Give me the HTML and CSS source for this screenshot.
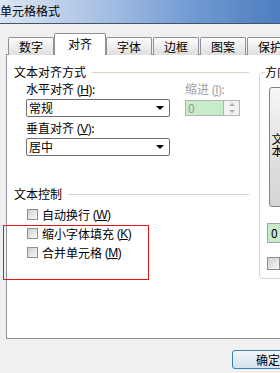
FILE: index.html
```html
<!DOCTYPE html>
<html lang="zh-CN">
    <head>
        <meta charset="UTF-8">
        <meta name="viewport" content="width=device-width, initial-scale=1.0">
        <title>单元格格式</title>
        <link rel="stylesheet" href="styles.css">
    </head>
    <body>
        <div class="titlebar">单元格格式</div>

        <div class="tabs">
            <div class="tab">数字</div>
            <div class="tab active">对齐</div>
            <div class="tab">字体</div>
            <div class="tab">边框</div>
            <div class="tab">图案</div>
            <div class="tab">保护</div>
        </div>

        <div class="panel">
            <div class="left">
                <div class="legend">文本对齐方式<span class="rule"></span></div>
                <div class="fields">
                    <div class="col">
                        <div class="label">水平对齐 <span class="key">(<u>H</u>)</span>:</div>
                        <div class="select"><span>常规</span><span class="arrow"></span></div>
                        <div class="label second">垂直对齐 <span class="key">(<u>V</u>)</span>:</div>
                        <div class="select"><span>居中</span><span class="arrow"></span></div>
                    </div>
                    <div class="indent">
                        <div class="label grey">缩进 <span class="key">(<u>I</u>)</span>:</div>
                        <div class="spin">
                            <div class="num">0</div>
                            <div class="spin-btns">
                                <span class="up"></span>
                                <span class="down"></span>
                            </div>
                        </div>
                    </div>
                </div>

                <div class="legend control">文本控制<span class="rule"></span></div>
                <div class="checks">
                    <div class="check"><span class="box"></span>自动换行 <span class="key">(<u>W</u>)</span></div>
                    <div class="check"><span class="box"></span>缩小字体填充 <span class="key">(<u>K</u>)</span></div>
                    <div class="check"><span class="box"></span>合并单元格 <span class="key">(<u>M</u>)</span></div>
                </div>
            </div>

            <fieldset class="orient">
                <legend>方向</legend>
                <div class="dial">
                    <span class="vtext">文本</span>
                </div>
                <div class="degrees">0</div>
                <span class="box small"></span>
            </fieldset>
        </div>

        <div class="footer">
            <button class="ok">确定</button>
        </div>

        <div class="mark"></div>
    </body>
</html>
```

FILE: styles.css
```css
body {
    margin: 0;
    width: 280px;
    height: 373px;
    overflow: hidden;
    position: relative;
    background: #f0f0f0;
    font-family: "Noto Sans CJK SC", "Noto Sans", sans-serif;
    font-size: 12px;
    line-height: 14px;
    color: #000;
}
u {
    text-decoration: underline;
}
.key {
    font-family: "Liberation Sans", sans-serif;
    letter-spacing: -0.5px;
}
.titlebar {
    height: 23px;
    line-height: 22px;
    border-bottom: 1px solid #44546b;
    background: linear-gradient(to right, #dce6f3 0%, #a9c2e3 35%, #6f99d0 70%, #4e7ec0 100%);
    font-size: 12px;
    white-space: nowrap;
}

/* tabs */
.tabs {
    display: flex;
    align-items: flex-end;
    margin-top: 9px;
    margin-left: 8px;
    margin-bottom: -1px;
    position: relative;
    z-index: 1;
    width: 320px;
}
.tab {
    box-sizing: border-box;
    width: 46px;
    height: 18px;
    margin-right: 1px;
    border: 1px solid #8d9199;
    border-bottom: none;
    border-radius: 2px 2px 0 0;
    background: linear-gradient(#fdfdfd, #dedede);
    text-align: center;
    line-height: 17px;
    flex-shrink: 0;
}
.tab.active {
    width: 52px;
    height: 22px;
    line-height: 19px;
    background: #fff;
    margin-right: 0;
    margin-left: -1px;
}

/* main panel */
.panel {
    box-sizing: border-box;
    width: 320px;
    height: 285px;
    margin-left: 6px;
    border: 1px solid #8d9199;
    background: #fff;
    display: flex;
    gap: 10px;
    padding: 10px 0 0 7px;
}
.left {
    width: 235px;
    flex-shrink: 0;
}
.legend {
    display: flex;
    align-items: center;
    white-space: nowrap;
}
.rule {
    flex: 1;
    margin-left: 6px;
    border-top: 1px solid #d5d5c6;
}
.fields {
    display: flex;
    gap: 15px;
    margin-left: 12px;
    margin-top: 3px;
}
.col {
    width: 144px;
}
.label {
    white-space: nowrap;
}
.label.second {
    margin-top: 4px;
}
.label.grey {
    color: #a3a3a3;
}
.select {
    box-sizing: border-box;
    height: 18px;
    margin-top: 2px;
    border: 1px solid #707070;
    border-radius: 2px;
    display: flex;
    align-items: center;
    justify-content: space-between;
    padding: 0 5px 0 2px;
    line-height: 16px;
}
.arrow {
    width: 0;
    height: 0;
    border-left: 4px solid transparent;
    border-right: 4px solid transparent;
    border-top: 4px solid #000;
}
.spin {
    display: flex;
    margin-top: 3px;
}
.num {
    box-sizing: border-box;
    width: 38px;
    height: 16px;
    border: 1px solid #b4b4b4;
    border-right: none;
    background: #c8ecca;
    color: #9a9a9a;
    line-height: 14px;
    padding-left: 2px;
}
.spin-btns {
    box-sizing: border-box;
    width: 17px;
    height: 16px;
    border: 1px solid #b4b4b4;
    background: #f2f2f2;
    display: flex;
    flex-direction: column;
    align-items: center;
    justify-content: space-around;
}
.up,
.down {
    width: 0;
    height: 0;
    border-left: 3px solid transparent;
    border-right: 3px solid transparent;
}
.up {
    border-bottom: 3px solid #b0b0b0;
}
.down {
    border-top: 3px solid #b0b0b0;
}
.legend.control {
    margin-top: 31px;
}
.checks {
    margin-top: 4px;
    margin-left: 13px;
}
.check {
    height: 19px;
    display: flex;
    align-items: center;
    white-space: pre;
}
.box {
    box-sizing: border-box;
    display: inline-block;
    width: 11px;
    height: 11px;
    margin-right: 4px;
    border: 1px solid #8e8f8f;
    background: linear-gradient(135deg, #cfcfcf, #f8f8f8);
    flex-shrink: 0;
}

/* orientation group */
.orient {
    box-sizing: border-box;
    margin: 0;
    width: 60px;
    height: 214px;
    min-width: 0;
    padding: 0 0 7px 9px;
    border: 1px solid #d5d5c6;
    border-radius: 4px;
}
.orient legend {
    padding: 0;
    margin-left: -4px;
    line-height: 14px;
}
.dial {
    box-sizing: border-box;
    width: 60px;
    height: 120px;
    margin-top: 8px;
    border: 1px solid #838383;
    border-radius: 3px;
    background: linear-gradient(#f7f7f7, #e4e4e4 45%, #d4d4d4);
    padding: 45px 0 0 1px;
}
.vtext {
    display: inline-block;
    writing-mode: vertical-rl;
    line-height: 13px;
}
.degrees {
    box-sizing: border-box;
    width: 40px;
    height: 20px;
    margin: 16px 0 0 -2px;
    border: 1px solid #a5a5a5;
    background: #c8ecca;
    line-height: 18px;
    padding-left: 3px;
}
.box.small {
    width: 13px;
    height: 13px;
    margin: 14px 0 0 -2px;
    display: block;
}

/* bottom buttons */
.footer {
    padding-left: 232px;
    margin-top: 11px;
}
.ok {
    box-sizing: border-box;
    width: 72px;
    height: 19px;
    padding: 0;
    border: 1px solid #3c7fb1;
    border-radius: 3px;
    background: linear-gradient(#f2f6fa, #d6e2ee);
    font-family: "Noto Sans CJK SC", sans-serif;
    font-size: 12px;
    line-height: 16px;
    color: #000;
    white-space: nowrap;
}

/* red annotation box */
.mark {
    position: absolute;
    left: 3px;
    top: 225px;
    width: 146px;
    height: 55px;
    box-sizing: border-box;
    border: 1px solid #ea1414;
}
```
